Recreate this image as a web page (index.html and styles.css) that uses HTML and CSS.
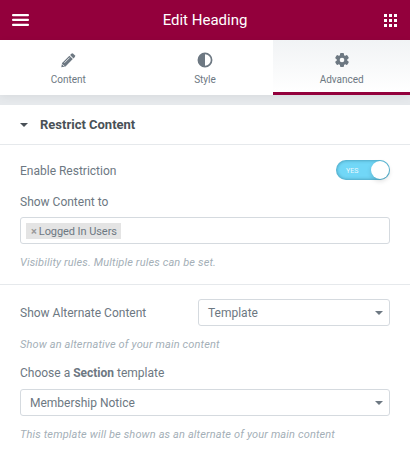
FILE: index.html
```
<!DOCTYPE html>
<html lang="en">
<head>
    <meta charset="UTF-8">
    <meta name="viewport" content="width=device-width, initial-scale=1.0">
    <title>Edit Heading</title>
    <link rel="stylesheet" href="styles.css">
</head>
<body>
    <div class="panel">
        <header class="panel-header">
            <svg class="menu-icon" width="17" height="12" viewBox="0 0 17 12" fill="#fff">
                <rect width="17" height="2.2" rx="1"/>
                <rect y="4.8" width="17" height="2.2" rx="1"/>
                <rect y="9.7" width="17" height="2.2" rx="1"/>
            </svg>
            <h1>Edit Heading</h1>
            <svg class="grid-icon" width="13" height="13" viewBox="0 0 13 13" fill="#fff">
                <path d="M0 0h3v3H0zM5 0h3v3H5zM10 0h3v3h-3zM0 5h3v3H0zM5 5h3v3H5zM10 5h3v3h-3zM0 10h3v3H0zM5 10h3v3H5zM10 10h3v3h-3z"/>
            </svg>
        </header>

        <nav class="tabs">
            <a class="tab">
                <svg width="16" height="16" viewBox="0 0 16 16" fill="#6d7882">
                    <path d="M1.300 15.300l.8-4.300L9.400 3.700l3.400 3.400-7.300 7.300z"/>
                    <path d="M10.100 3l1.300-1.300q.9-.8 1.800 0l1.600 1.600q.8.9 0 1.800l-1.300 1.300z"/>
                    <path d="M4.400 10.800l5.200-5.200M2.400 12.300l2 2" stroke="#fff" stroke-width=".8" fill="none"/>
                </svg>
                <span>Content</span>
            </a>
            <a class="tab">
                <svg width="16" height="16" viewBox="0 0 16 16">
                    <circle cx="8" cy="8" r="6.600" fill="none" stroke="#6d7882" stroke-width="1.700"/>
                    <path d="M8 1.500a6.500 6.500 0 0 0 0 13z" fill="#6d7882"/>
                </svg>
                <span>Style</span>
            </a>
            <a class="tab active">
                <svg width="16" height="16" viewBox="0 0 16 16">
                    <g fill="#6d7882">
                        <rect x="6" y="1" width="4" height="14" rx="1"/>
                        <rect x="6" y="1" width="4" height="14" rx="1" transform="rotate(60 8 8)"/>
                        <rect x="6" y="1" width="4" height="14" rx="1" transform="rotate(120 8 8)"/>
                        <circle cx="8" cy="8" r="5.300"/>
                    </g>
                    <circle cx="8" cy="8" r="2.300" fill="#fafbfb"/>
                </svg>
                <span>Advanced</span>
            </a>
        </nav>

        <div class="section-title">
            <svg width="8" height="4" viewBox="0 0 8 4" fill="#495157"><path d="M0 0h8L4 4z"/></svg>
            <h2>Restrict Content</h2>
        </div>

        <div class="controls">
            <div class="row">
                <label class="switch-label">Enable Restriction</label>
                <div class="switch"><span>YES</span></div>
            </div>
            <label class="label">Show Content to</label>
            <div class="tag-input">
                <span class="tag"><span class="remove">×</span>Logged In Users</span>
            </div>
            <p class="description">Visibility rules. Multiple rules can be set.</p>
        </div>

        <div class="controls alternate">
            <div class="row">
                <label>Show Alternate Content</label>
                <div class="select select-small">
                    <span>Template</span>
                    <svg width="8" height="4" viewBox="0 0 8 4" fill="#6d7882"><path d="M0 0h8L4 4z"/></svg>
                </div>
            </div>
            <p class="description">Show an alternative of your main content</p>
            <label class="label template-label">Choose a <strong>Section</strong> template</label>
            <div class="select">
                <span>Membership Notice</span>
                <svg width="8" height="4" viewBox="0 0 8 4" fill="#6d7882"><path d="M0 0h8L4 4z"/></svg>
            </div>
            <p class="description">This template will be shown as an alternate of your main content</p>
        </div>
    </div>
</body>
</html>
```
FILE: styles.css
```
* {
    box-sizing: border-box;
}
body {
    font-family: Roboto, Arial, sans-serif;
    font-size: 12px;
    line-height: 14px;
    color: #6d7882;
    background-color: #fff;
    margin: 0;
}
h1, h2, p {
    margin: 0;
}
.panel-header {
    display: flex;
    align-items: center;
    justify-content: space-between;
    height: 40px;
    padding: 0 13px 0 12px;
    background-color: #93003c;
}
.panel-header h1 {
    color: #fff;
    font-size: 15px;
    font-weight: 400;
    padding-right: 3px;
}
.tabs {
    display: grid;
    grid-template-columns: repeat(3, 1fr);
    height: 55px;
    box-shadow: 0 2px 8px rgba(0, 0, 0, 0.06);
}
.tab {
    display: flex;
    flex-direction: column;
    align-items: center;
    gap: 5px;
    padding-top: 12px;
    font-size: 10px;
    background-color: #fff;
}
.tab.active {
    background: linear-gradient(#f1f3f5, #fff);
    border-bottom: 3px solid #93003c;
}
.panel {
    background: linear-gradient(#e6e9ec, #e6e9ec) 0 95px / 100% 10px no-repeat;
}
.section-title {
    display: flex;
    align-items: center;
    gap: 12px;
    height: 40px;
    margin-top: 10px;
    padding: 0 20px;
    background-color: #fff;
    border-bottom: 1px solid #e6e9ec;
    position: relative;
}
.section-title h2 {
    color: #495157;
    font-size: 13px;
    font-weight: 700;
}
.controls {
    padding: 15px 20px 0;
}
.row {
    display: flex;
    align-items: center;
    justify-content: space-between;
}
.label {
    display: block;
    margin: 15px 0 8px;
}
.switch-label {
    padding-top: 2px;
}
.template-label {
    margin: 14px 0 9px;
}
.switch {
    display: flex;
    align-items: center;
    justify-content: space-between;
    width: 54px;
    height: 20px;
    padding: 0 1px 0 10px;
    border-radius: 10px;
    background-color: #71d7f7;
    box-shadow: inset 0 0 3px 1px rgba(0, 60, 80, 0.3);
    color: #e9f8fd;
    font-size: 7px;
}
.switch span {
    padding-top: 1px;
}
.switch::after {
    content: "";
    width: 18px;
    height: 18px;
    border-radius: 50%;
    background-color: #fff;
    box-shadow: 0 2px 5px rgba(0, 0, 0, 0.15);
}
.tag-input {
    display: flex;
    align-items: center;
    height: 27px;
    padding: 0 5px;
    border: 1px solid #d5dadf;
    border-radius: 3px;
}
.tag {
    height: 16px;
    padding: 0 4px 0 5px;
    line-height: 17px;
    font-size: 11px;
    letter-spacing: -0.07px;
    background-color: #e4e4e4;
}
.remove {
    margin-right: 2px;
    color: #999;
    font-weight: 700;
}
.description {
    margin-top: 12px;
    color: #a4afb7;
    font-size: 11px;
    font-style: italic;
    letter-spacing: 0.14px;
}
.alternate {
    margin-top: 14px;
    padding-top: 14px;
    border-top: 1px solid #e6e9ec;
}
.select {
    display: flex;
    align-items: center;
    justify-content: space-between;
    height: 27px;
    padding: 0 6px 0 9px;
    border: 1px solid #d5dadf;
    border-radius: 3px;
}
.select-small {
    width: 192px;
}
```
